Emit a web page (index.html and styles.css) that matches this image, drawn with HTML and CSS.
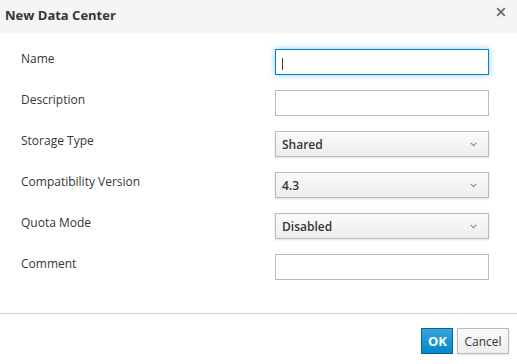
FILE: index.html
```html
<!DOCTYPE html>
<html lang="en">
<head>
    <meta charset="UTF-8">
    <title>New Data Center</title>
    <link rel="stylesheet" href="styles.css">
</head>
<body>
    <div class="dialog">
        <div class="dialog-header">
            <h4 class="dialog-title">New Data Center</h4>
            <button type="button" class="close" aria-label="Close">
                <svg width="10" height="10" viewBox="0 0 10 10"><path d="M1.2 1.2L8.8 8.8M8.8 1.2L1.2 8.8" stroke="#6f6f6f" stroke-width="1.9"/></svg>
            </button>
        </div>
        <form class="dialog-body">
            <div class="form-row">
                <label for="dcName">Name</label>
                <div class="field">
                    <input type="text" id="dcName" class="form-control focused">
                    <span class="caret-line"></span>
                </div>
            </div>
            <div class="form-row">
                <label for="dcDesc">Description</label>
                <input type="text" id="dcDesc" class="form-control">
            </div>
            <div class="form-row">
                <label>Storage Type</label>
                <div class="select-btn"><span>Shared</span><svg class="chev" width="7" height="5" viewBox="0 0 7 5"><path d="M0.7 0.8L3.5 3.6L6.3 0.8" fill="none" stroke="#8a8c8e" stroke-width="1.1"/></svg></div>
            </div>
            <div class="form-row">
                <label>Compatibility Version</label>
                <div class="select-btn"><span>4.3</span><svg class="chev" width="7" height="5" viewBox="0 0 7 5"><path d="M0.7 0.8L3.5 3.6L6.3 0.8" fill="none" stroke="#8a8c8e" stroke-width="1.1"/></svg></div>
            </div>
            <div class="form-row">
                <label>Quota Mode</label>
                <div class="select-btn"><span>Disabled</span><svg class="chev" width="7" height="5" viewBox="0 0 7 5"><path d="M0.7 0.8L3.5 3.6L6.3 0.8" fill="none" stroke="#8a8c8e" stroke-width="1.1"/></svg></div>
            </div>
            <div class="form-row">
                <label for="dcComment">Comment</label>
                <input type="text" id="dcComment" class="form-control">
            </div>
        </form>
        <div class="dialog-footer">
            <button type="button" class="btn btn-primary">OK</button>
            <button type="button" class="btn btn-default">Cancel</button>
        </div>
    </div>
</body>
</html>
```

FILE: styles.css
```css
body {
    margin: 0;
    background-color: #fff;
    font-family: 'Open Sans', 'Liberation Sans', sans-serif;
    font-size: 12px;
    color: #363636;
}

.dialog {
    width: 517px;
    height: 364px;
    display: flex;
    flex-direction: column;
}

.dialog-header {
    height: 33px;
    background-color: #f5f5f5;
    display: flex;
    align-items: center;
    justify-content: space-between;
    padding: 0 11px 0 5px;
    box-sizing: border-box;
}

.dialog-title {
    margin: 0 0 4px 0;
    font-size: 13px;
    font-weight: 700;
    color: #363636;
}

.close {
    align-self: flex-start;
    background: none;
    border: none;
    padding: 0;
    margin-top: 7px;
    display: flex;
    cursor: pointer;
}

.dialog-body {
    flex: 1;
    display: flex;
    flex-direction: column;
    gap: 15px;
    padding: 16px 28px 0 21px;
    margin: 0;
}

.form-row {
    display: flex;
    align-items: center;
    justify-content: space-between;
    height: 26px;
}

.form-row label {
    margin-bottom: 7px;
}

.field {
    position: relative;
}

.form-control {
    width: 214px;
    height: 26px;
    box-sizing: border-box;
    border: 1px solid #bbb;
    padding: 2px 6px;
    font-family: inherit;
    font-size: 12px;
    color: #363636;
    background-color: #fff;
    outline: none;
    display: block;
}

.form-control.focused {
    border-color: #0088ce;
    box-shadow: 0 0 6px rgba(0, 136, 206, 0.45);
}

/* text cursor of the focused field */
.caret-line {
    position: absolute;
    left: 7px;
    top: 9px;
    width: 1px;
    height: 12px;
    background-color: #363636;
}

.select-btn {
    width: 214px;
    height: 26px;
    box-sizing: border-box;
    border: 1px solid #bbb;
    background-image: linear-gradient(to bottom, #fafafa 0%, #ededed 100%);
    box-shadow: 0 1px 2px rgba(3, 3, 3, 0.12);
    display: flex;
    align-items: center;
    justify-content: space-between;
    padding: 0 10px 0 6px;
    font-weight: 600;
}

.chev {
    margin-right: 1px;
}

.dialog-footer {
    border-top: 1px solid #d1d1d1;
    height: 51px;
    box-sizing: border-box;
    display: flex;
    justify-content: flex-end;
    align-items: flex-start;
    gap: 4px;
    padding: 14px 8px 0 0;
}

.btn {
    height: 26px;
    box-sizing: border-box;
    font-family: inherit;
    font-size: 12px;
    padding: 0 6px;
    cursor: pointer;
}

.btn-primary {
    width: 32px;
    background-color: #0088ce;
    background-image: linear-gradient(to bottom, #39a5dc 0%, #0088ce 100%);
    border: 1px solid #00659c;
    color: #fff;
    font-weight: 700;
    font-size: 13px;
}

.btn-default {
    width: 52px;
    background-image: linear-gradient(to bottom, #fafafa 0%, #ededed 100%);
    border: 1px solid #bbb;
    color: #363636;
    box-shadow: 0 1px 2px rgba(3, 3, 3, 0.12);
}
```
